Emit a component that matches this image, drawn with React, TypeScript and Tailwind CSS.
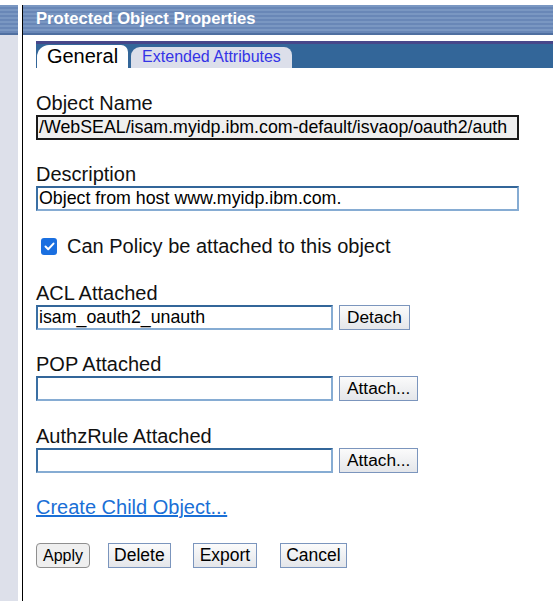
import React from "react";

const stripes =
  "bg-[repeating-linear-gradient(to_bottom,#7a97c2_0px,#7a97c2_2px,#6987b7_2px,#6987b7_4px)]";

function Field({
  label,
  value,
  top,
  disabled,
  short,
  button,
}: {
  label: string;
  value: string;
  top: string;
  disabled?: boolean;
  short?: boolean;
  button?: string;
}) {
  const inputCls = disabled
    ? "border-2 border-[#1a1a1a] bg-[#efefef]"
    : "border-2 border-t-[#336699] border-l-[#3a6fa3] border-r-[#86acd3] border-b-[#86acd3] bg-white";
  return (
    <div className={top}>
      <div className="text-[20px] leading-[22px] text-[#111]">{label}</div>
      <div className="mt-px flex items-center gap-[6px]">
        <div
          className={`${inputCls} h-[25px] ${short ? "w-[297px]" : "w-[483px]"} overflow-hidden whitespace-nowrap px-px text-[17.8px] leading-[21px] text-black`}
        >
          {value}
        </div>
        {button && (
          <button className="h-[25px] border border-[#7b95bd] bg-gradient-to-b from-[#fbfbfb] to-[#e4e6ea] px-[7px] text-[17.3px] leading-[21px] text-black">
            {button}
          </button>
        )}
      </div>
    </div>
  );
}

export default function App() {
  return (
    <div className="flex h-[601px] w-[553px] overflow-hidden bg-white pt-[5px] font-['Liberation_Sans',Arial,sans-serif]">
      {/* left nav strip */}
      <div className="flex w-[18px] flex-col">
        <div className={`h-[30px] ${stripes} border-b-2 border-[#4f6fa0]`} />
        <div className="flex-1 bg-[#dde0ea]" />
      </div>
      <div className="ml-[4px] w-px bg-black" />

      <div className="flex flex-1 flex-col">
        {/* header */}
        <div
          className={`h-[30px] ${stripes} border-b-2 border-[#4f6fa0] pl-[13px] text-[16.6px] font-bold leading-[28px] text-white`}
        >
          Protected Object Properties
        </div>

        {/* tabs */}
        <div className="ml-[13px] mt-[6px] flex h-[27px] items-end border-t-[3px] border-[#47478a] bg-[#336699] pl-[1px]">
          <div className="flex h-[23px] w-[91px] items-end justify-center rounded-tl-[12px] rounded-tr-[7px] bg-white pb-px text-[20px] leading-[22px] text-black">
            General
          </div>
          <div className="ml-[3px] flex h-[21px] w-[161px] items-end justify-center rounded-tl-[9px] rounded-tr-[8px] bg-[#dcdfea] pb-[2px] text-[16px] leading-[18px] text-[#3434e6]">
            Extended Attributes
          </div>
        </div>

        {/* form */}
        <div className="flex flex-col pl-[13px]">
          <Field
            top="mt-[24px]"
            label="Object Name"
            value="/WebSEAL/isam.myidp.ibm.com-default/isvaop/oauth2/auth"
            disabled
          />
          <Field
            top="mt-[23px]"
            label="Description"
            value="Object from host www.myidp.ibm.com."
          />

          <label className="mt-[24px] flex h-[22px] items-center text-[20px] leading-[22px] text-[#111]">
            <span className="ml-[5px] mr-[10px] flex h-[17px] w-[16px] items-center justify-center rounded-[3px] bg-[#1a6fe0]">
              <svg width="11" height="9" viewBox="0 0 11 9" fill="none">
                <path
                  d="M1.5 4.5 L4.2 7.2 L9.5 1.6"
                  stroke="white"
                  strokeWidth="2"
                  strokeLinecap="round"
                  strokeLinejoin="round"
                />
              </svg>
            </span>
            Can Policy be attached to this object
          </label>

          <Field
            top="mt-[25px]"
            label="ACL Attached"
            value="isam_oauth2_unauth"
            short
            button="Detach"
          />
          <Field top="mt-[23px]" label="POP Attached" value="" short button="Attach..." />
          <Field top="mt-[24px]" label="AuthzRule Attached" value="" short button="Attach..." />

          <a
            href="#"
            className="mt-[23px] self-start text-[20px] leading-[22px] text-[#1a6fd6] underline"
          >
            Create Child Object...
          </a>

          <div className="mt-[25px] flex items-center">
            <button className="h-[25px] rounded-[4px] border border-[#8f8f8f] bg-[#efefef] px-[6px] text-[16px] leading-[20px] text-black">
              Apply
            </button>
            <button className="ml-[18px] h-[25px] border border-[#7b95bd] bg-gradient-to-b from-[#fbfbfb] to-[#e4e6ea] px-[5px] text-[17.5px] leading-[21px] text-black">
              Delete
            </button>
            <button className="ml-[22px] h-[25px] border border-[#7b95bd] bg-gradient-to-b from-[#fbfbfb] to-[#e4e6ea] px-[6px] text-[17.5px] leading-[21px] text-black">
              Export
            </button>
            <button className="ml-[23px] h-[25px] border border-[#7b95bd] bg-gradient-to-b from-[#fbfbfb] to-[#e4e6ea] px-[5px] text-[17.5px] leading-[21px] text-black">
              Cancel
            </button>
          </div>
        </div>
      </div>
    </div>
  );
}
